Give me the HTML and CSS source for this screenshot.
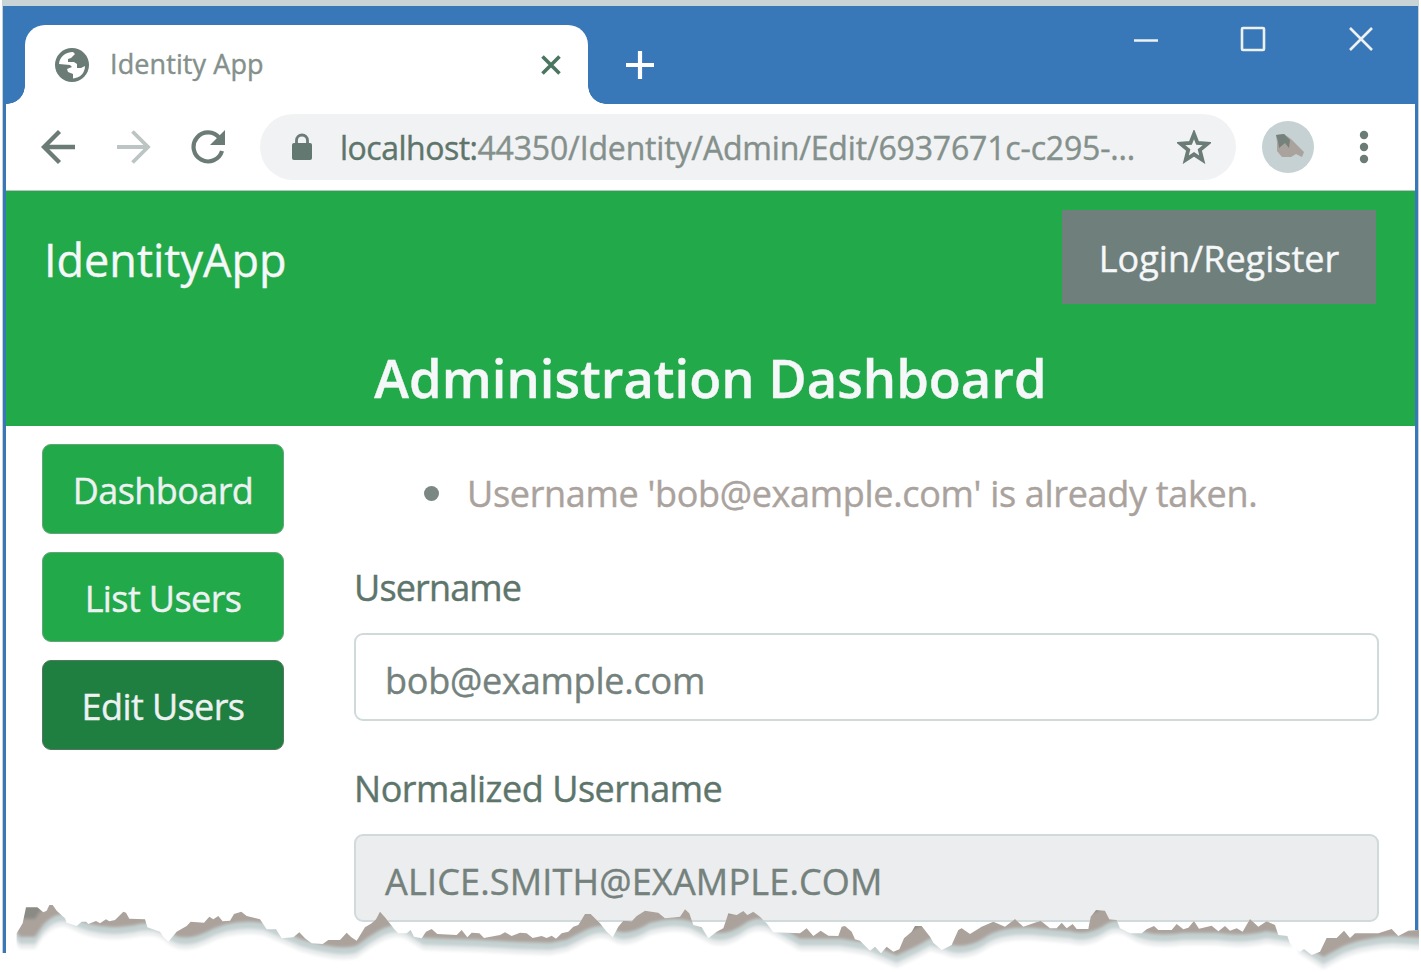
FILE: index.html
```html
<!DOCTYPE html>
<html lang="en">
<head>
<meta charset="utf-8">
<title>Identity App</title>
<link rel="stylesheet" href="styles.css">
</head>
<body>
<div class="window">
  <header class="titlebar">
    <div class="tab">
      <svg class="globe" width="34" height="34" viewBox="0 0 34 34"><circle cx="17" cy="17" r="17" fill="#6b7b76"/><path d="M4 16C4.500 9 10 4 18 4L20 6L16 10L13 11V14H19L22 16V20L26 20L30 18C30 25 25 30 18 30.500L18 26L13 24L12 21L17 19L15 17Z" fill="#fff"/></svg>
      <span class="tab-title">Identity App</span>
      <svg class="tab-close" width="20" height="20" viewBox="0 0 20 20"><path d="M1.500 1.500L18.500 18.500M18.500 1.500L1.500 18.500" stroke="#4c7560" stroke-width="3.600"/></svg>
    </div>
    <svg class="plus" width="28" height="28" viewBox="0 0 28 28"><path d="M14 0V28M0 14H28" stroke="#fff" stroke-width="4.200"/></svg>
    <div class="controls">
      <svg width="24" height="26" viewBox="0 0 24 26"><path d="M0 14.500H24" stroke="#eef1f2" stroke-width="2.500"/></svg>
      <svg width="26" height="26" viewBox="0 0 26 26"><rect x="2" y="2" width="22" height="22" rx="1" fill="none" stroke="#eef1f2" stroke-width="2.600"/></svg>
      <svg width="26" height="26" viewBox="0 0 26 26"><path d="M2 2L24 24M24 2L2 24" stroke="#eef1f2" stroke-width="2.600"/></svg>
    </div>
  </header>
  <div class="toolbar">
    <svg class="back" width="34" height="34" viewBox="0 0 34 34"><path d="M34 17H3M18.500 1.500L3 17L18.500 32.500" fill="none" stroke="#6b7b76" stroke-width="4.300"/></svg>
    <svg class="forward" width="34" height="34" viewBox="0 0 34 34"><path d="M0 17H31M15.500 1.500L31 17L15.500 32.500" fill="none" stroke="#bcc5c4" stroke-width="3.800"/></svg>
    <svg class="reload" width="34" height="34" viewBox="0 0 34 34"><path d="M28.500 8A14.500 14.500 0 1 0 31 21" fill="none" stroke="#6b7b76" stroke-width="4.200"/><path d="M34 0V15H19Z" fill="#6b7b76"/></svg>
    <div class="address">
      <svg class="lock" width="20" height="28" viewBox="0 0 20 28"><path d="M4.500 12V7.500A5.500 5.500 0 0 1 15.500 7.500V12" fill="none" stroke="#6b7b76" stroke-width="2.800"/><rect y="10" width="20" height="17" rx="2" fill="#637870"/></svg>
      <span class="url"><b>localhost:</b>44350/Identity/Admin/Edit/6937671c-c295-...</span>
      <svg class="star" width="34" height="34" viewBox="0 0 34 34"><path d="M17 4L20.500 13L30.500 13.700L22.800 20L25.300 29.800L17 24.300L8.700 29.800L11.200 20L3.500 13.700L13.500 13Z" fill="none" stroke="#6b7b76" stroke-width="3.800"/></svg>
    </div>
    <svg class="avatar" width="52" height="52" viewBox="0 0 52 52"><circle cx="26" cy="26" r="26" fill="#c5d1d2"/><path d="M14 14L22 13L29 18L42 31L40 36L34 33L29 36H20L15 30V21Z" fill="#aaa29d"/><path d="M14 14L22 13L28 19L27 27L23 22L17 27L16 20Z" fill="#74817c"/></svg>
    <svg class="menu" width="10" height="34" viewBox="0 0 10 34"><g fill="#6b7b76"><circle cx="5" cy="5" r="4.200"/><circle cx="5" cy="17" r="4.200"/><circle cx="5" cy="29" r="4.200"/></g></svg>
  </div>
  <div class="banner">
    <div class="nav"><span class="brand">IdentityApp</span><a class="login"><span>Login/Register</span></a></div>
    <h1><span>Administration Dashboard</span></h1>
  </div>
  <main class="content">
    <nav class="side">
      <a class="btn"><span>Dashboard</span></a>
      <a class="btn"><span>List Users</span></a>
      <a class="btn active"><span>Edit Users</span></a>
    </nav>
    <section class="form">
      <div class="error"><i class="dot"></i><span>Username 'bob@example.com' is already taken.</span></div>
      <label class="label t-user">Username</label>
      <div class="field"><span class="t-bob">bob@example.com</span></div>
      <label class="label second">Normalized Username</label>
      <div class="field disabled"><span class="t-alice">ALICE.SMITH@EXAMPLE.COM</span></div>
    </section>
  </main>
</div>
<!-- Torn paper edge: the clip is the ragged rim, the layers form its shadow -->
<svg class="torn" width="1421" height="92" viewBox="0 0 4263 276">
  <defs>
    <clipPath id="rim"><path d="M48 276L50 160L68 130L78 82L112 82L130 97L140 92L148 75L158 75L170 92L195 115L200 128L230 138L245 125L258 125L265 132L288 123L300 130L318 118L328 124L345 120L370 95L378 98L388 116L435 118L442 142L480 155L490 170L505 185L530 155L560 138L572 125L612 128L628 110L640 118L655 108L668 124L690 122L702 102L724 95L740 108L780 118L800 148L828 148L845 175L880 172L898 157L915 175L935 190L968 192L985 180L1020 180L1040 158L1054 172L1070 182L1095 142L1115 130L1128 118L1140 95L1155 112L1185 150L1195 160L1220 160L1232 150L1242 170L1265 175L1278 155L1295 147L1312 162L1370 165L1385 150L1402 172L1415 158L1438 160L1452 174L1500 165L1515 157L1535 168L1560 158L1580 160L1598 174L1625 168L1640 174L1655 167L1668 176L1685 160L1705 155L1720 140L1735 135L1755 102L1772 102L1800 130L1820 155L1838 172L1855 140L1870 122L1895 124L1910 108L1935 92L1975 98L1995 115L2040 110L2055 88L2068 100L2080 135L2105 142L2125 175L2150 155L2170 145L2185 100L2210 105L2230 93L2242 105L2260 95L2280 110L2300 130L2320 157L2400 160L2420 145L2440 168L2462 152L2485 167L2515 168L2525 140L2535 138L2555 155L2565 178L2580 182L2610 212L2625 200L2643 220L2660 200L2680 215L2698 208L2712 175L2735 155L2745 138L2765 138L2790 170L2800 188L2825 210L2855 195L2875 150L2885 145L2910 162L2945 140L2980 125L3015 140L3045 117L3070 140L3100 130L3122 122L3150 145L3170 145L3185 128L3200 145L3218 132L3230 147L3265 147L3272 110L3288 90L3315 92L3328 118L3350 120L3360 145L3390 160L3425 160L3440 148L3462 138L3475 150L3515 150L3530 132L3550 148L3565 143L3582 123L3597 146L3635 137L3655 154L3675 138L3690 152L3710 145L3728 155L3750 117L3775 140L3800 124L3825 135L3835 165L3862 168L3870 190L3900 215L3912 207L3935 225L3960 215L3980 174L4010 174L4032 152L4050 174L4065 160L4135 160L4175 147L4195 168L4225 152L4257 150V276Z"/></clipPath>
    <path id="fold" d="M30 0V165L60 207L105 207L130 170Q175 125 210 145Q300 195 420 168Q480 160 505 192Q550 225 620 192Q700 150 790 165Q850 190 900 213Q1020 250 1070 233L1110 205Q1180 155 1220 178L1270 210L1430 215L1550 222L1650 225L1700 215L1760 185Q1810 160 1850 190Q1890 203 1950 165Q2020 145 2070 160L2120 185Q2170 212 2230 170Q2275 137 2320 165L2400 212H2520L2600 225L2690 263L2750 235L2790 212L2830 222Q2885 250 2950 212Q3000 175 3100 180L3210 190Q3260 205 3310 175Q3350 145 3390 175Q3440 210 3550 195H3650Q3730 208 3800 190L3870 200L3874 205V175H3896V220L3970 268L4020 240Q4080 210 4180 205L4263 210V0Z"/>
    <filter id="soft" x="-5%" y="-20%" width="110%" height="140%"><feGaussianBlur stdDeviation="4"/></filter>
  </defs>
  <rect x="20" y="222" width="4243" height="54" fill="#fff"/>
  <g clip-path="url(#rim)">
    <rect width="4263" height="276" fill="#fff"/>
    <g filter="url(#soft)">
      <use href="#fold" fill="#ebedee"/>
      <use href="#fold" y="-15" fill="#c5d1d1"/>
      <use href="#fold" y="-36" fill="#aba29c"/>
      <use href="#fold" y="-90" fill="#8b8b85"/>
    </g>
  </g>
</svg>
</body>
</html>
```
FILE: styles.css
```css
* { box-sizing: border-box; }
body { margin: 0; height: 972px; overflow: hidden; background: #fff; position: relative; font-family: "Open Sans", "Noto Sans", sans-serif; -webkit-text-stroke: .4px; }
svg { display: block; flex: none; }
span { white-space: nowrap; }
.window { width: 1417px; height: 953px; margin-left: 2px; border-left: 1px solid #c5d1d2; border-right: 1px solid #c5d1d2; border-top: 6px solid #c9d4d6; overflow: hidden; background: linear-gradient(#3877b8, #3877b8) left / 3px 100% no-repeat, linear-gradient(#3877b8, #3877b8) right / 3px 100% no-repeat, #fff; }
.titlebar { height: 98px; background: #3877b8; display: flex; align-items: flex-start; }
.tab { position: relative; width: 563px; height: 79px; margin: 19px 0 0 22px; padding: 0 27px 0 30px; background: #fff; border-radius: 20px 20px 0 0; display: flex; align-items: center; }
.tab::before, .tab::after { content: ""; position: absolute; bottom: 0; width: 18px; height: 18px; }
.tab::before { left: -18px; background: radial-gradient(circle at 0 0, transparent 17.5px, #fff 18px); }
.tab::after { right: -18px; background: radial-gradient(circle at 100% 0, transparent 17.5px, #fff 18px); }
.tab-title { font-size: 27px; letter-spacing: .1px; color: #84908b; margin-left: 21px; padding-bottom: 2px; flex: 1; }
.plus { margin: 45px 0 0 38px; }
.controls { display: flex; gap: 82px; margin: 20px 44px 0 auto; }
.toolbar { height: 87px; margin: 0 3px; padding-left: 35px; display: flex; align-items: center; border-bottom: 1px solid #b9c3c0; }
.forward { margin-left: 42px; }
.reload { margin-left: 40px; }
.address { width: 976px; height: 66px; margin-left: 35px; padding: 0 25px 0 32px; border-radius: 33px; background: #f1f2f3; display: flex; align-items: center; }
.url { font-size: 32px; letter-spacing: -.17px; color: #84908b; margin-left: 28px; flex: 1; }
.url b { font-weight: 400; color: #5d756b; letter-spacing: -.5px; }
.avatar { margin-left: 26px; }
.menu { margin-left: 45px; }
.banner { height: 235px; margin: 0 3px; background: #21a94a; color: #f5f7f8; }
.nav { display: flex; justify-content: space-between; padding: 19px 39px 0 38px; }
.brand { font-size: 45px; line-height: 100px; }
.login { width: 314px; height: 94px; padding-top: 2px; background: #6f7f7b; font-size: 36px; display: flex; align-items: center; justify-content: center; }
h1 { margin: 33px 0 0; font-size: 52.5px; font-weight: 600; line-height: 70px; text-align: center; }
.content { display: flex; margin: 0 3px; padding: 18px 36px 0; gap: 70px; }
.side { width: 242px; display: flex; flex-direction: column; gap: 18px; }
.btn { height: 90px; padding-top: 2px; border-radius: 9px; background: #21a94a; color: #eef1f2; border: 1px solid #65a678; font-size: 36px; letter-spacing: -.6px; display: flex; align-items: center; justify-content: center; }
.active { background: #1e7f40; border-color: #55775f; }
.form { width: 1025px; }
.error { display: flex; align-items: center; height: 98px; padding: 0 0 0 70px; font-size: 36px; letter-spacing: -.32px; color: #aaa29d; }
.dot { width: 15px; height: 15px; border-radius: 50%; background: #7b8782; margin-right: 28px; }
.label { display: block; font-size: 36px; letter-spacing: -.48px; line-height: 52px; height: 50px; margin-top: 20px; color: #5d756b; }
.t-user { letter-spacing: -.85px; }
.field { height: 88px; margin-top: 21px; border: 2px solid #d0dadb; border-radius: 9px; padding: 6px 0 0 29px; font-size: 36px; color: #74817c; display: flex; align-items: center; }
.t-bob { letter-spacing: -.22px; }
.t-alice { letter-spacing: .18px; }
.second { margin-top: 42px; }
.disabled { background: #ebedee; }
.torn { position: absolute; left: 0; top: 880px; }
```
